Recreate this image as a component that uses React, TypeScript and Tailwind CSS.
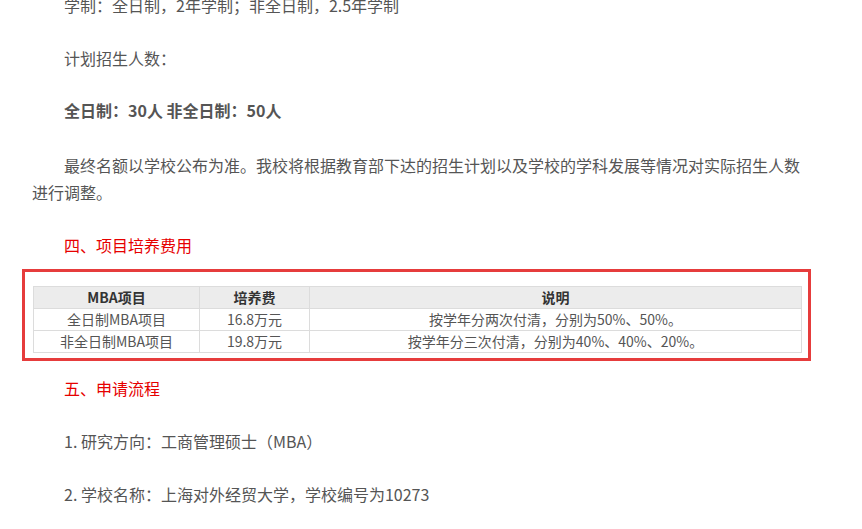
import React from "react";

const font = { fontFamily: '"Microsoft YaHei", "Noto Sans CJK SC", "Noto Sans", sans-serif' };

export default function App() {
  return (
    <div className="w-[862px] h-[529px] overflow-hidden bg-white" style={font}>
      <div className="w-[771px] ml-[32px] mt-[-8px] text-[16px] leading-[27px] text-[#555]">
        <p className="indent-[32px]">学制：全日制，2年学制；非全日制，2.5年学制</p>
        <p className="indent-[32px] mt-[26px]">计划招生人数：</p>
        <p className="indent-[32px] mt-[25px] font-bold">全日制：30人 非全日制：50人</p>
        <p className="indent-[32px] mt-[28px]">
          最终名额以学校公布为准。我校将根据教育部下达的招生计划以及学校的学科发展等情况对实际招生人数进行调整。
        </p>
        <p className="indent-[32px] mt-[26px] text-[#e60000]">四、项目培养费用</p>
        <div className="ml-[-10px] w-[789px] mt-[10px] border-[3px] border-[#e63c3c] pt-[14px] pl-[8px] pr-[6px] pb-[5px]">
          <table className="w-full border-collapse text-[14px] leading-[21px] text-center">
            <thead>
              <tr className="bg-[#ececec]">
                <th className="border border-[#dcdcdc] w-[166px] font-bold text-[#333]">MBA项目</th>
                <th className="border border-[#dcdcdc] w-[110px] font-bold text-[#333]">培养费</th>
                <th className="border border-[#dcdcdc] font-bold text-[#333]">说明</th>
              </tr>
            </thead>
            <tbody className="text-[#555]">
              <tr>
                <td className="border border-[#dcdcdc]">全日制MBA项目</td>
                <td className="border border-[#dcdcdc]">16.8万元</td>
                <td className="border border-[#dcdcdc]">按学年分两次付清，分别为50%、50%。</td>
              </tr>
              <tr>
                <td className="border border-[#dcdcdc]">非全日制MBA项目</td>
                <td className="border border-[#dcdcdc]">19.8万元</td>
                <td className="border border-[#dcdcdc]">按学年分三次付清，分别为40%、40%、20%。</td>
              </tr>
            </tbody>
          </table>
        </div>
        <p className="indent-[32px] mt-[14px] text-[#e60000]">五、申请流程</p>
        <p className="indent-[32px] mt-[26px]">1. 研究方向：工商管理硕士（MBA）</p>
        <p className="indent-[32px] mt-[26px]">2. 学校名称：上海对外经贸大学，学校编号为10273</p>
      </div>
    </div>
  );
}
